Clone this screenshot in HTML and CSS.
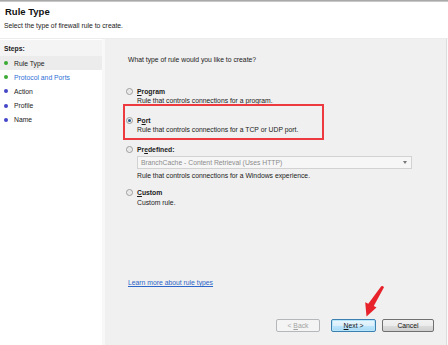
FILE: index.html
```html
<!DOCTYPE html>
<html>
<head>
<meta charset="utf-8">
<link rel="stylesheet" href="styles.css">
</head>
<body>
<div class="page">
  <div class="topline"></div>
  <div class="header">
    <div class="title">Rule Type</div>
    <div class="subtitle">Select the type of firewall rule to create.</div>
  </div>
  <div class="main">
    <div class="steps">
      <div class="steps-head">Steps:</div>
      <div class="step current"><span class="dot green"></span>Rule Type</div>
      <div class="step link-step"><span class="dot green"></span>Protocol and Ports</div>
      <div class="step"><span class="dot blue"></span>Action</div>
      <div class="step"><span class="dot blue"></span>Profile</div>
      <div class="step"><span class="dot blue"></span>Name</div>
    </div>
    <div class="strip"></div>
    <div class="content">
      <div class="question">What type of rule would you like to create?</div>

      <div class="option opt-program">
        <div class="opt-label"><span class="radio"></span><span class="lbl"><u>P</u>rogram</span></div>
        <div class="desc">Rule that controls connections for a program.</div>
      </div>

      <div class="option opt-port">
        <div class="opt-label"><span class="radio checked"></span><span class="lbl">P<u>o</u>rt</span></div>
        <div class="desc">Rule that controls connections for a TCP or UDP port.</div>
      </div>

      <div class="option opt-predef">
        <div class="opt-label"><span class="radio"></span><span class="lbl">Pr<u>e</u>defined:</span></div>
        <div class="select"><span>BranchCache - Content Retrieval (Uses HTTP)</span><span class="caret"></span></div>
        <div class="desc">Rule that controls connections for a Windows experience.</div>
      </div>

      <div class="option opt-custom">
        <div class="opt-label"><span class="radio"></span><span class="lbl"><u>C</u>ustom</span></div>
        <div class="desc">Custom rule.</div>
      </div>

      <a class="learn">Learn more about rule types</a>

      <div class="buttons">
        <div class="btn disabled">&lt; <u>B</u>ack</div>
        <div class="btn primary"><u>N</u>ext &gt;</div>
        <div class="btn">Cancel</div>
      </div>
    </div>
    <div class="edge"></div>
  </div>
  <svg class="arrow" width="448" height="345" viewBox="0 0 448 345">
    <polygon points="382.8,286 384,287.2 373.8,306 376.5,307.6 366.5,316.5 365.2,302.2 368.3,303.8 381.2,286.2" fill="#e8222b"/>
  </svg>
</div>
</body>
</html>
```
FILE: styles.css
```css
* { box-sizing: border-box; }
html, body { margin: 0; padding: 0; }
body {
  width: 448px;
  height: 345px;
  overflow: hidden;
  background: #fff;
  font-family: "Liberation Sans", Arial, sans-serif;
  font-size: 6.8px;
  color: #1b1b1b;
}
.page {
  position: relative;
  width: 448px;
  height: 345px;
  display: flex;
  flex-direction: column;
}
.topline {
  height: 2px;
  background: linear-gradient(#9a9a9a, #d6d6d6);
}
.header {
  height: 37px;
  padding: 4px 5px 0 4px;
  background: #fff;
  border-bottom: 1px solid #ececec;
}
.title {
  font-weight: bold;
  font-size: 9.5px;
  line-height: 11px;
  padding-left: 1px;
  color: #111;
}
.subtitle {
  margin-top: 4px;
  line-height: 10px;
}
.main {
  flex: 1;
  display: flex;
  min-height: 0;
}
.steps {
  width: 102px;
  background: #fff;
}
.steps-head {
  height: 16px;
  line-height: 16px;
  padding-left: 4px;
  padding-top: 2px;
  font-weight: bold;
  background: #f4f4f4;
  margin-top: 1px;
  display: flex;
  align-items: center;
}
.step {
  height: 14.2px;
  padding-left: 4px;
  display: flex;
  align-items: center;
}
.step.current { background: #ececec; }
.step.link-step { color: #2f6fd6; }
.dot {
  width: 4px;
  height: 4px;
  border-radius: 50%;
  margin-right: 6px;
  flex: none;
}
.dot.green { background: #3caa34; }
.dot.blue { background: #4545c8; }
.strip {
  width: 3px;
  background: #f8f8f8;
}
.content {
  flex: 1;
  background: #f0f0f0;
  display: flex;
  flex-direction: column;
  padding: 0 12px 13px 23px;
}
.edge {
  width: 2px;
  background: linear-gradient(to right, #dcdcdc 50%, #fbfbfb 50%);
}
.question {
  margin-top: 16px;
  line-height: 10px;
}
.opt-label {
  display: flex;
  align-items: center;
  height: 10px;
  margin-left: -2px;
}
.lbl {
  font-weight: bold;
  margin-left: 4px;
}
.radio {
  width: 7px;
  height: 7px;
  border-radius: 50%;
  border: 1px solid #9a9a9a;
  background: radial-gradient(circle, #e2e2e2 0, #f8f8f8 100%);
  position: relative;
  flex: none;
}
.radio.checked::after {
  content: "";
  position: absolute;
  left: 1px;
  top: 1px;
  width: 3px;
  height: 3px;
  border-radius: 50%;
  background: #2a5e8e;
}
.desc {
  line-height: 10px;
  margin-left: 9px;
}
.opt-program { margin-top: 21px; }
.opt-port {
  margin-top: -2px;
  margin-left: -5px;
  width: 201px;
  border: 2px solid #ec3a40;
  padding: 9px 0 3px 3px;
}
.opt-predef { margin-top: 4px; }
.select {
  margin: 2px 0 0 9px;
  width: 275px;
  height: 13px;
  border: 1px solid #d2d2d2;
  background: #f6f6f6;
  color: #8c8c8c;
  display: flex;
  align-items: center;
  justify-content: space-between;
  padding: 0 4px 0 3px;
}
.caret {
  width: 0;
  height: 0;
  border-left: 2.5px solid transparent;
  border-right: 2.5px solid transparent;
  border-top: 3px solid #777;
}
.opt-predef .desc { margin-top: 2px; }
.opt-custom { margin-top: 6px; }
.opt-custom .desc { margin-top: 1px; }
.learn {
  margin-top: auto;
  line-height: 10px;
  color: #2d66c8;
  text-decoration: underline;
  align-self: flex-start;
}
.buttons {
  margin-top: 31px;
  display: flex;
  justify-content: flex-end;
}
.btn {
  height: 13px;
  line-height: 11px;
  text-align: center;
  border: 1px solid #707070;
  border-radius: 2px;
  background: linear-gradient(#f2f2f2 0%, #ebebeb 50%, #dddddd 51%, #cfcfcf 100%);
  color: #111;
  width: 52px;
}
.btn.disabled {
  width: 44px;
  border-color: #b5b8ba;
  background: #f4f4f4;
  color: #a3a3a3;
  margin-right: 11px;
}
.btn.primary {
  width: 45px;
  border-color: #3c7fb1;
  background: linear-gradient(#eaf6fd 0%, #d9f0fc 50%, #bee6fd 51%, #a7d9f5 100%);
  box-shadow: inset 0 0 0 1px #b7e6fb;
  margin-right: 6px;
}
.arrow {
  position: absolute;
  left: 0;
  top: 0;
  pointer-events: none;
}
```
